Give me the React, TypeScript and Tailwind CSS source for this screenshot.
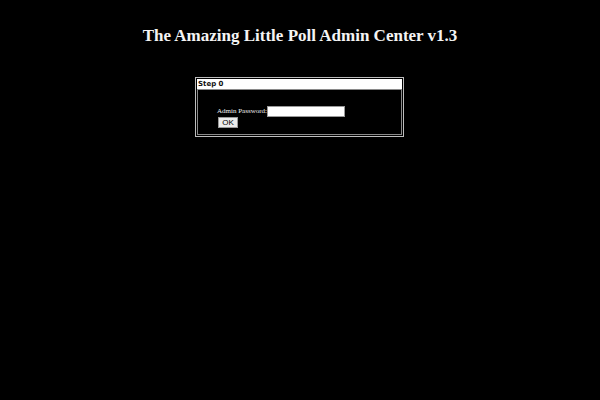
export default function App() {
  return (
    <div className="min-h-[400px] w-full bg-black font-['Liberation_Serif',serif] text-white">
      <h1 className="pt-[26px] text-center text-[17px] font-bold leading-[20px] text-[#f4f4f4]">
        The Amazing Little Poll Admin Center v1.3
      </h1>
      <div className="mt-[31px] flex justify-center">
        <div className="ml-[-1px] w-[209px] border border-[#bdbdbd] p-px">
          <div className="h-[10px] bg-white pl-px font-['DejaVu_Sans',sans-serif] text-[7px] font-bold leading-[10px] text-[#111]">
            Step 0
          </div>
          <div className="h-[46px] border border-[#8a8a8a] pl-[19px] pt-[15px]">
            <div className="flex h-[12px] items-center">
              <span className="text-[7px] leading-[10px] text-[#f0f0f0]">Admin Password:</span>
              <input type="password" className="h-[11px] w-[78px] border border-[#999] bg-white p-0" />
            </div>
            <button className="ml-px block h-[11px] w-[20px] border border-[#999] bg-[#ececec] p-0 font-['Liberation_Sans',sans-serif] text-[8px] leading-[9px] text-black">
              OK
            </button>
          </div>
        </div>
      </div>
    </div>
  );
}
